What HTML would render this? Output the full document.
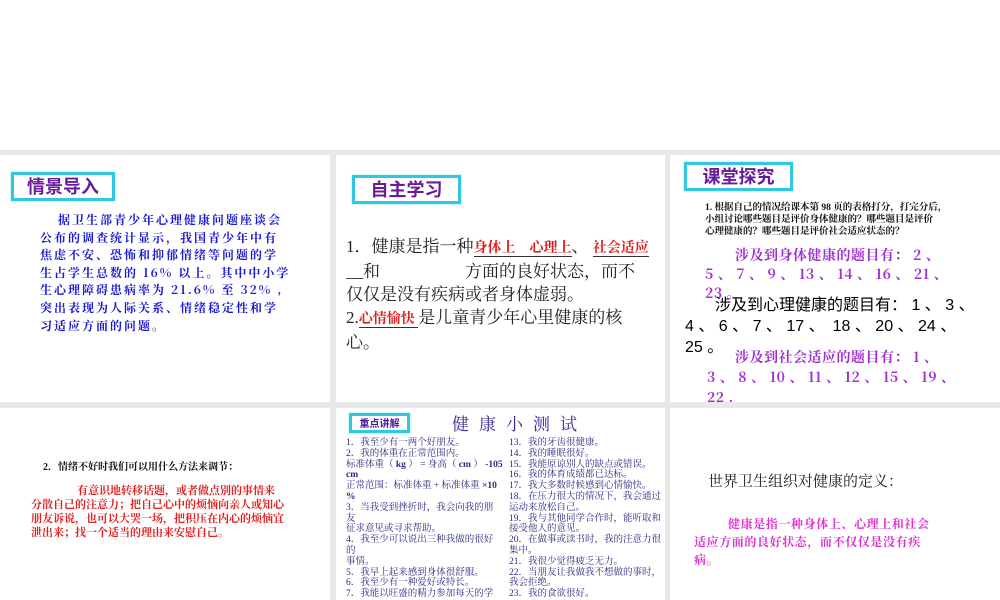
<!DOCTYPE html>
<html><head><meta charset="utf-8"><style>
body{margin:0;width:1000px;height:600px;background:#e8e8e8;position:relative;overflow:hidden;font-family:"Liberation Sans","Noto Sans CJK SC",sans-serif}
.top{position:absolute;left:0;top:0;width:1000px;height:150px;background:#fff}
.p{position:absolute;background:#fff;overflow:hidden}
.t{position:absolute;border:3px solid #33c6e0;box-shadow:0 0 2px #7ee;color:#6a1b9a;font-weight:bold;font-family:"Noto Sans CJK SC",sans-serif;text-align:center}
.a{position:absolute;white-space:nowrap}
.kai{font-family:"Noto Serif CJK SC","Noto Sans CJK SC",serif;font-weight:bold}
.u{color:#e02020;font-weight:bold;border-bottom:1px solid #333;font-size:14px}
</style></head><body>
<div class="top"></div>
<div class="p" style="left:0;top:155px;width:330px;height:247px">
 <div class="t" style="left:11px;top:17px;width:98px;height:23px;font-size:18px;line-height:23px">情景导入</div>
 <div class="a kai" style="left:40px;top:56px;font-size:12px;line-height:17.6px;color:#1a1ad0;letter-spacing:2px">
 <div style="padding-left:18px">据卫生部青少年心理健康问题座谈会</div>
 <div>公布的调查统计显示，我国青少年中有</div>
 <div>焦虑不安、恐怖和抑郁情绪等问题的学</div>
 <div>生占学生总数的 16% 以上。其中中小学</div>
 <div>生心理障碍患病率为 21.6% 至 32% ,</div>
 <div>突出表现为人际关系、情绪稳定性和学</div>
 <div>习适应方面的问题。</div>
 </div>
</div>
<div class="p" style="left:336px;top:155px;width:329px;height:247px">
 <div class="t" style="left:16px;top:20px;width:103px;height:23px;font-size:18px;line-height:23px">自主学习</div>
 <div class="a" style="left:10px;top:80px;font-size:17px;line-height:23px;color:#222;font-family:'Liberation Serif','Noto Serif CJK SC',serif">
 <div>1．健康是指一种<span class="u">身体上　心理上</span>、 <span class="u">社会适应</span></div>
 <div>__和　　　　　方面的良好状态，而不</div>
 <div>仅仅是没有疾病或者身体虚弱。</div>
 <div>2.<span class="u">心情愉快 </span> 是儿童青少年心里健康的核</div>
 <div>心。</div>
 </div>
</div>
<div class="p" style="left:670px;top:155px;width:330px;height:247px">
 <div class="t" style="left:14px;top:7px;width:103px;height:23px;font-size:18px;line-height:23px">课堂探究</div>
 <div class="a" style="left:35px;top:47px;font-size:9.5px;line-height:12px;color:#111;font-weight:bold;font-family:'Liberation Serif','Noto Serif CJK SC',serif">
 <div>1. 根据自己的情况给课本第 98 页的表格打分，打完分后，</div>
 <div>小组讨论哪些题目是评价身体健康的？哪些题目是评价</div>
 <div>心理健康的？哪些题目是评价社会适应状态的？</div>
 </div>
 <div class="a kai" style="left:35px;top:91px;font-size:14px;line-height:19px;color:#a030d0;letter-spacing:0.5px">
 <div style="padding-left:30px">涉及到身体健康的题目有： 2 、</div>
 <div>5 、 7 、 9 、 13 、 14 、 16 、 21 、</div>
 <div>23 。</div>
 </div>
 <div class="a" style="left:15px;top:140px;font-size:16px;line-height:21px;color:#000">
 <div style="padding-left:30px">涉及到心理健康的题目有： 1 、 3 、</div>
 <div>4 、 6 、 7 、 17 、　18 、 20 、 24 、</div>
 <div>25 。</div>
 </div>
 <div class="a kai" style="left:37px;top:192px;font-size:14px;line-height:20px;color:#a030d0;letter-spacing:0.5px">
 <div style="padding-left:28px">涉及到社会适应的题目有： 1 、</div>
 <div>3 、 8 、 10 、 11 、 12 、 15 、 19 、</div>
 <div>22 .</div>
 </div>
</div>
<div class="p" style="left:0;top:408px;width:330px;height:192px">
 <div class="a" style="left:43px;top:50px;font-size:10px;font-weight:bold;color:#111;font-family:'Liberation Serif','Noto Serif CJK SC',serif">2．情绪不好时我们可以用什么方法来调节：</div>
 <div class="a" style="left:31px;top:76px;font-size:11px;line-height:14px;font-weight:bold;color:#e02020;font-family:'Liberation Serif','Noto Serif CJK SC',serif">
 <div style="padding-left:46px">有意识地转移话题，或者做点别的事情来</div>
 <div>分散自己的注意力；把自己心中的烦恼向亲人或知心</div>
 <div>朋友诉说，也可以大哭一场，把积压在内心的烦恼宜</div>
 <div>泄出来；找一个适当的理由来安慰自己。</div>
 </div>
</div>
<div class="p" style="left:336px;top:408px;width:329px;height:192px">
 <div class="t" style="left:13px;top:5px;width:55px;height:14px;font-size:10px;line-height:14px;color:#4a1aa0">重点讲解</div>
 <div class="a" style="left:116px;top:2px;font-size:17px;color:#3a2a90;letter-spacing:10px;font-family:'Noto Serif CJK SC',serif">健康小测试</div>
 <div class="a" style="left:10px;top:30px;font-size:9.5px;line-height:10.8px;color:#2a2a80;font-family:'Liberation Serif','Noto Serif CJK SC',serif">
 <div>1．我至少有一两个好朋友。</div><div>2．我的体重在正常范围内。</div>
 <div>标准体重（ <b>kg</b> ） = 身高（ <b>cm</b> ） <b>-105</b></div><div><b>cm</b></div>
 <div>正常范围：标准体重 + 标准体重 <b>×10</b></div><div><b>%</b></div>
 <div>3．当我受到挫折时，我会向我的朋</div><div>友</div><div>征求意见或寻求帮助。</div>
 <div>4．我至少可以说出三种我做的很好</div><div>的</div><div>事情。</div>
 <div>5．我早上起来感到身体很舒服。</div><div>6．我至少有一种爱好或特长。</div><div>7．我能以旺盛的精力参加每天的学</div>
 </div>
 <div class="a" style="left:173px;top:30px;font-size:9.5px;line-height:10.8px;color:#2a2a80;font-family:'Liberation Serif','Noto Serif CJK SC',serif">
 <div>13．我的牙齿很健康。</div><div>14．我的睡眠很好。</div><div>15．我能原谅别人的缺点或错误。</div>
 <div>16．我的体育成绩都已达标。</div><div>17．我大多数时候感到心情愉快。</div>
 <div>18．在压力很大的情况下，我会通过</div><div>运动来放松自己。</div>
 <div>19．我与其他同学合作时，能听取和</div><div>接受他人的意见。</div>
 <div>20．在做事或读书时，我的注意力很</div><div>集中。</div><div>21．我很少觉得疲乏无力。</div>
 <div>22．当朋友让我做我不想做的事时，</div><div>我会拒绝。</div><div>23．我的食欲很好。</div>
 </div>
</div>
<div class="p" style="left:670px;top:408px;width:330px;height:192px">
 <div class="a" style="left:38px;top:62px;font-size:15px;color:#222;font-family:'Liberation Serif','Noto Serif CJK SC',serif">世界卫生组织对健康的定义：</div>
 <div class="a kai" style="left:24px;top:107px;font-size:12px;line-height:18px;color:#e030d0;letter-spacing:0.6px">
 <div style="padding-left:34px">健康是指一种身体上、心理上和社会</div>
 <div>适应方面的良好状态，而不仅仅是没有疾</div>
 <div>病。</div>
 </div>
</div>
</body></html>
